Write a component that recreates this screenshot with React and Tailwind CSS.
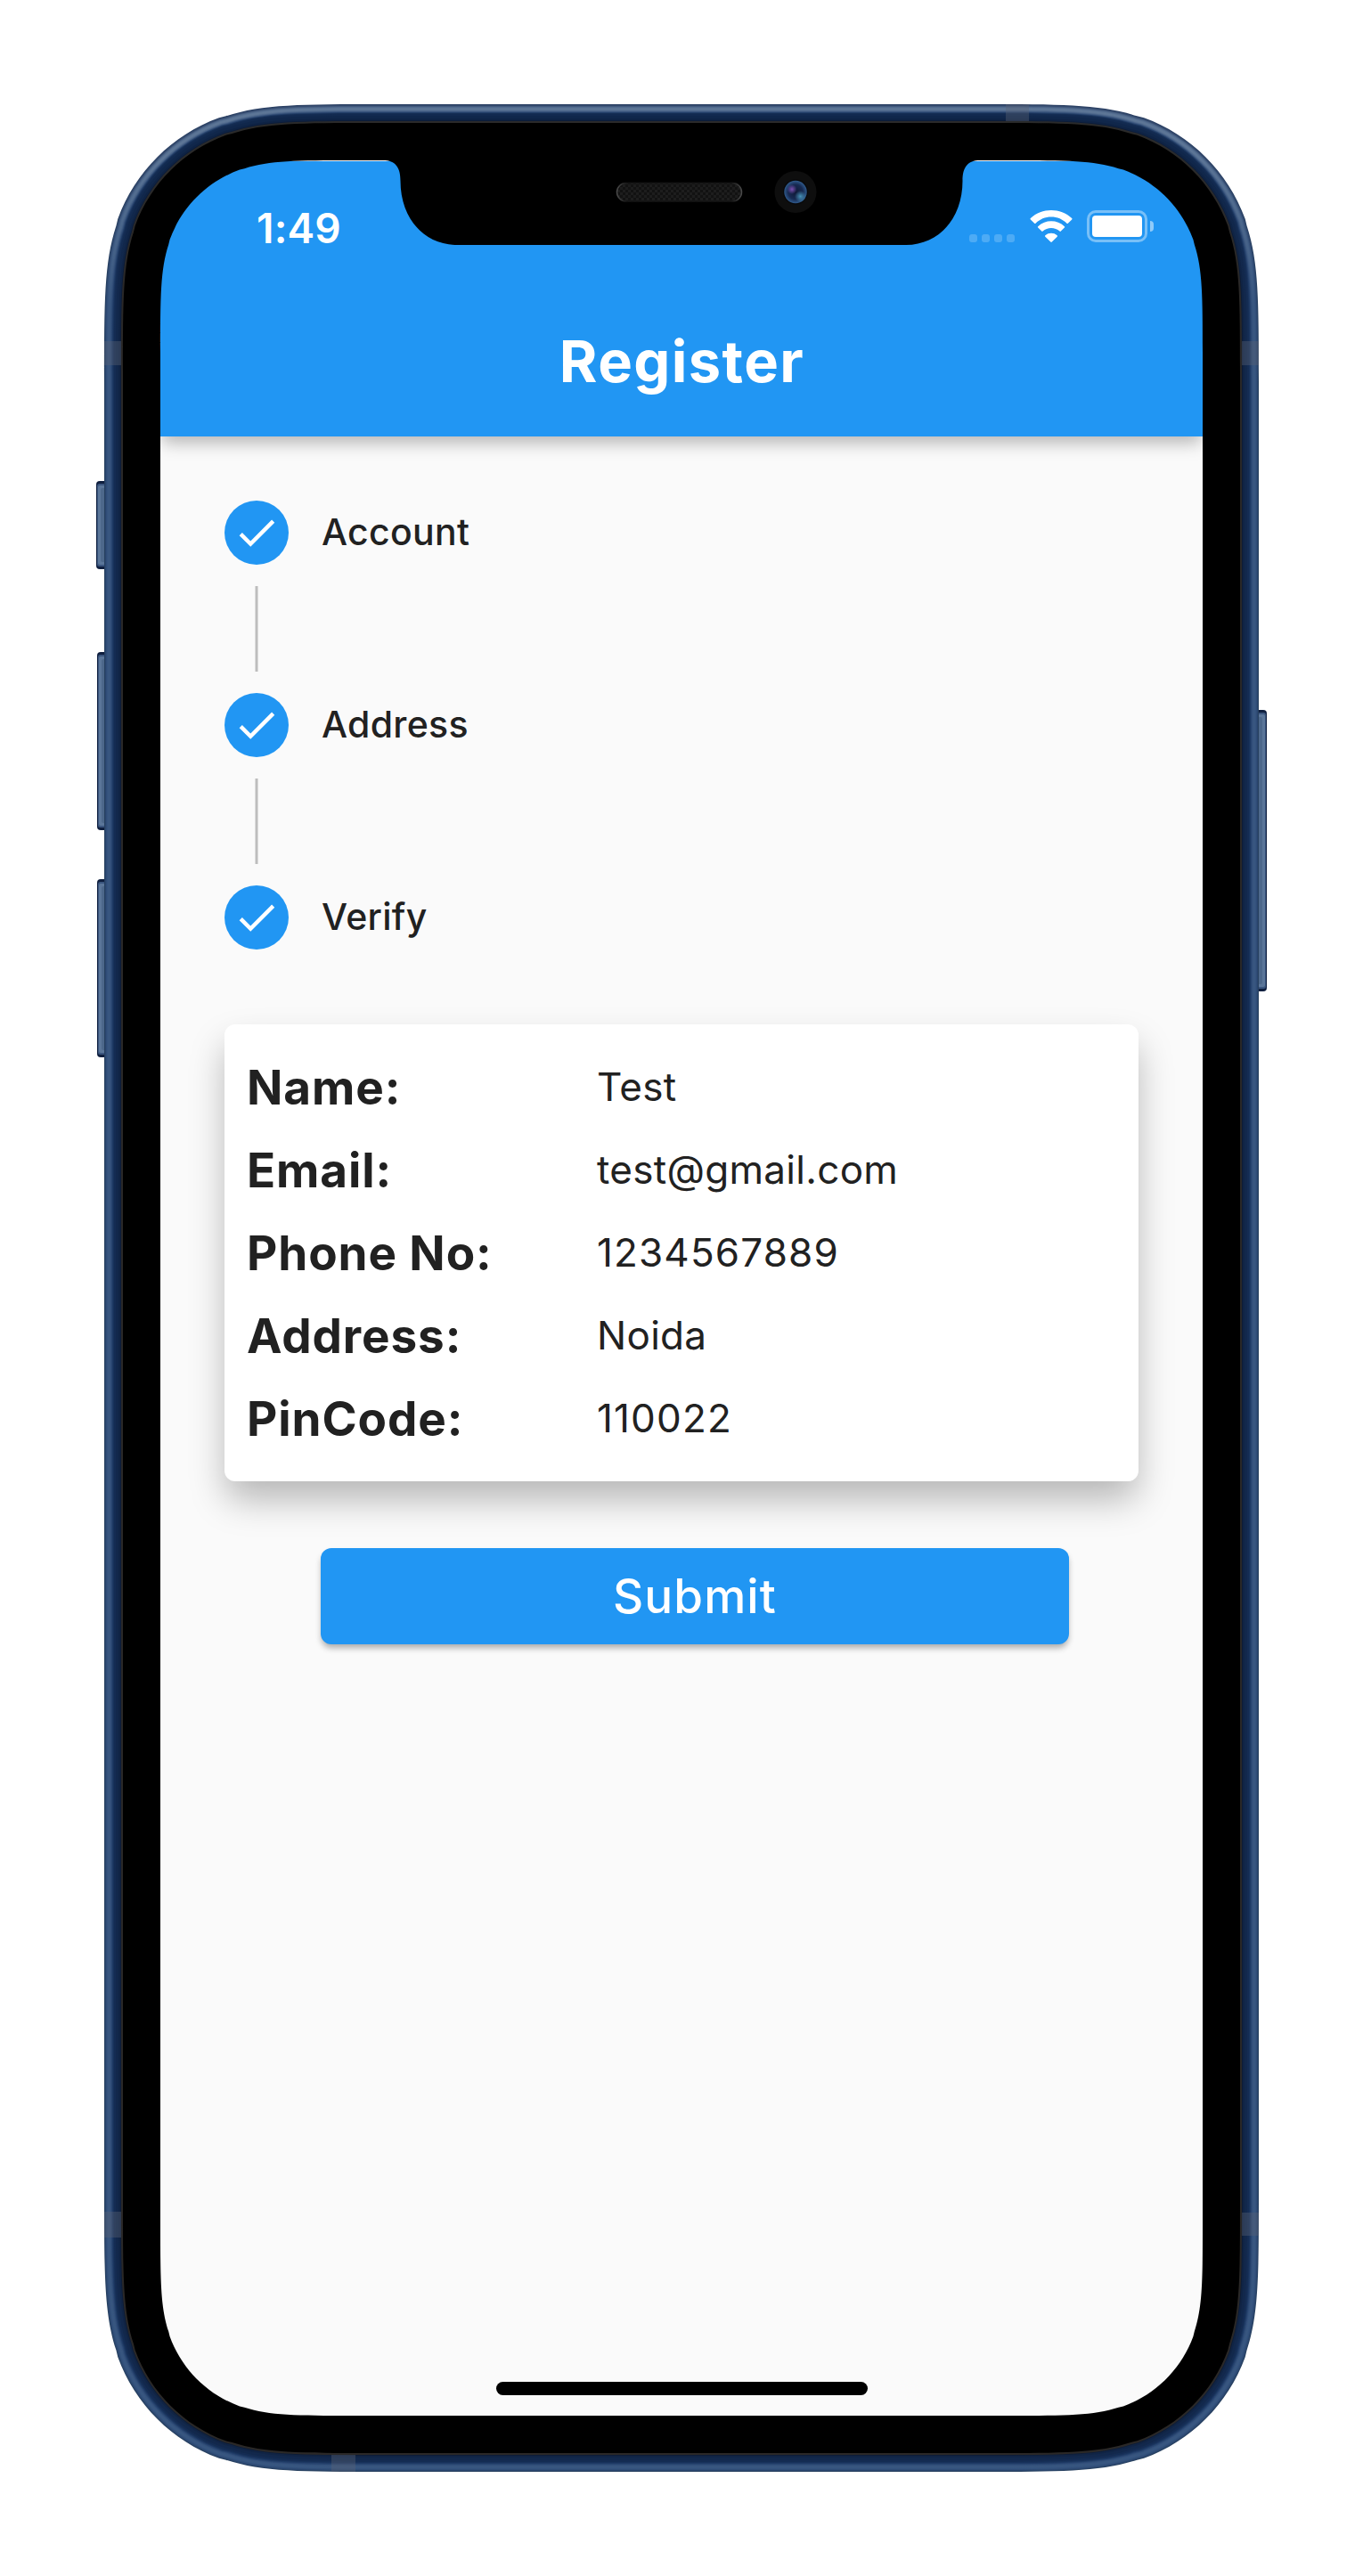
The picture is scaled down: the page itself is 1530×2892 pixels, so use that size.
import React from "react";

const r2 = (n) => Math.round(n * 100) / 100;

// Continuous-curvature rounded rectangle.
function squircle(x, y, w, h, r) {
  const a = 1.528665 * r, b = 1.088493 * r, c = 0.868407 * r, d = 0.669934 * r,
    e = 0.065496 * r, f = 0.631494 * r, g = 0.074911 * r, i = 0.372824 * r, j = 0.169059 * r;
  const X = x + w, Y = y + h;
  const p = (px, py) => r2(px) + " " + r2(py);
  return [
    "M", p(x + a, y), "L", p(X - a, y),
    "C", p(X - b, y), p(X - c, y), p(X - d, y + e), "L", p(X - f, y + g),
    "C", p(X - i, y + j), p(X - j, y + i), p(X - g, y + f), "L", p(X - e, y + d),
    "C", p(X, y + c), p(X, y + b), p(X, y + a), "L", p(X, Y - a),
    "C", p(X, Y - b), p(X, Y - c), p(X - e, Y - d), "L", p(X - g, Y - f),
    "C", p(X - j, Y - i), p(X - i, Y - j), p(X - f, Y - g), "L", p(X - d, Y - e),
    "C", p(X - c, Y), p(X - b, Y), p(X - a, Y), "L", p(x + a, Y),
    "C", p(x + b, Y), p(x + c, Y), p(x + d, Y - e), "L", p(x + f, Y - g),
    "C", p(x + i, Y - j), p(x + j, Y - i), p(x + g, Y - f), "L", p(x + e, Y - d),
    "C", p(x, Y - c), p(x, Y - b), p(x, Y - a), "L", p(x, y + a),
    "C", p(x, y + b), p(x, y + c), p(x + e, y + d), "L", p(x + g, y + f),
    "C", p(x + j, y + i), p(x + i, y + j), p(x + f, y + g), "L", p(x + d, y + e),
    "C", p(x + c, y), p(x + b, y), p(x + a, y), "Z",
  ].join(" ");
}

const ring = (n) => squircle(117 + n, 117 + n, 1296 - 2 * n, 2658 - 2 * n, 204 - n);
const SCREEN = squircle(180, 180, 1170, 2532, 141);

// [inset, colour at the top, colour on the sides and bottom]
const METAL = [
  [0, "#2a3f62", "#27405f"],
  [1, "#334a6e", "#2a466f"],
  [2, "#42597d", "#304d77"],
  [3, "#506a8d", "#34527d"],
  [4, "#5a7394", "#375680"],
  [5, "#5e7797", "#38567f"],
  [6, "#5a7394", "#36547e"],
  [7, "#4d678b", "#314e79"],
  [8, "#3a557d", "#284570"],
  [9, "#233f69", "#1e3a65"],
  [10, "#152e55", "#18325b"],
  [11, "#122a50", "#142c53"],
  [13, "#10274b", "#12284c"],
  [16, "#0e2345", "#102445"],
  [18, "#0c1c38", "#0d1c36"],
  [19, "#2a2a2a", "#2a2827"],
  [21, "#000000", "#000000"],
];

function SideButton({ x, y, h }) {
  return (
    <g>
      <rect x={x} y={y} width="20" height={h} rx="4" fill="#0f1f3f" />
      <rect x={x + 1} y={y + 3} width="18" height={h - 6} rx="2.5" fill="#3a557e" />
      <rect x={x + 2} y={y + 5} width="16" height={h - 10} rx="2" fill="#5b7699" />
      <rect x={x + 5} y={y + 8} width="10" height={h - 16} rx="2" fill="#4d688b" />
    </g>
  );
}

function Device() {
  return (
    <svg className="pointer-events-none absolute inset-0" width="1530" height="2892" viewBox="0 0 1530 2892" aria-hidden="true">
      <defs>
        {METAL.map(([n, top, side]) => (
          <linearGradient key={n} id={"m" + n} gradientUnits="userSpaceOnUse" x1="0" y1="117" x2="0" y2="340">
            <stop offset="0" stopColor={top} />
            <stop offset="0.25" stopColor={top} />
            <stop offset="1" stopColor={side} />
          </linearGradient>
        ))}
        <mask id="bezel" maskUnits="userSpaceOnUse" x="0" y="0" width="1530" height="2892">
          <rect width="1530" height="2892" fill="#fff" />
          <path d={SCREEN} fill="#000" />
        </mask>
        <pattern id="mesh" width="6" height="6" patternUnits="userSpaceOnUse">
          <rect width="6" height="6" fill="#121212" />
          <rect width="3" height="3" fill="#1d1d1d" />
          <rect x="3" y="3" width="3" height="3" fill="#1d1d1d" />
        </pattern>
        <linearGradient id="rim">
          <stop offset="0" stopColor="#4a4a4a" />
          <stop offset="0.08" stopColor="#151515" />
          <stop offset="0.92" stopColor="#151515" />
          <stop offset="1" stopColor="#4a4a4a" />
        </linearGradient>
        <radialGradient id="lens">
          <stop offset="0" stopColor="#0f1836" />
          <stop offset="0.65" stopColor="#172a52" />
          <stop offset="1" stopColor="#2f5a8c" />
        </radialGradient>
        <radialGradient id="violet">
          <stop offset="0" stopColor="#7a4fb0" />
          <stop offset="1" stopColor="#7a4fb0" stopOpacity="0" />
        </radialGradient>
        <radialGradient id="teal">
          <stop offset="0" stopColor="#4690b4" />
          <stop offset="1" stopColor="#4690b4" stopOpacity="0" />
        </radialGradient>
      </defs>
      <g mask="url(#bezel)">
        <SideButton x={108} y={540} h={99} />
        <SideButton x={109} y={732} h={200} />
        <SideButton x={109} y={987} h={200} />
        <SideButton x={1402} y={797} h={316} />
        {METAL.map(([n]) => (
          <path key={n} d={ring(n)} fill={"url(#m" + n + ")"} />
        ))}
        <g fill="#5b6272" fillOpacity="0.4">
          <rect x="117" y="383" width="19" height="27" />
          <rect x="1394" y="383" width="19" height="27" />
          <rect x="117" y="2483" width="19" height="29" />
          <rect x="1394" y="2484" width="19" height="26" />
          <rect x="1129" y="117" width="26" height="19" />
          <rect x="372" y="2756" width="27" height="19" />
        </g>
      </g>
      <path d="M430 179V180C444 180 449.500 188 449.500 203C449.500 246 477 275 513 275H1017C1053 275 1080.500 246 1080.500 203C1080.500 188 1086 180 1100 180V179Z" fill="#000" />
      <rect x="692.500" y="205.500" width="140" height="20.500" rx="10.250" fill="url(#mesh)" stroke="url(#rim)" strokeWidth="1.500" />
      <circle cx="893" cy="215.500" r="23.500" fill="#0e0e0e" />
      <circle cx="893" cy="215.500" r="14" fill="#08080a" />
      <circle cx="893" cy="215.500" r="12.700" fill="url(#lens)" />
      <circle cx="889" cy="212.500" r="5.500" fill="url(#violet)" />
      <circle cx="898.500" cy="220.500" r="6.500" fill="url(#teal)" />
    </svg>
  );
}

function StatusIcons() {
  return (
    <div className="flex h-9 items-center">
      <div className="mt-[27px] flex gap-[5px]">
        {[0, 1, 2, 3].map((i) => (
          <span key={i} className="size-[9px] rounded-[3px] bg-white/20" />
        ))}
      </div>
      <svg className="ml-[16px]" width="50" height="36" viewBox="0 0 50 36" fill="#fff" aria-hidden="true">
        <path d="M25 7.500c6.700 0 12.900 2.600 17.500 7.200.4.400.9.400 1.300 0l4.400-4.300c.4-.4.400-1 0-1.400C35.400-3 14.600-3 1.800 9c-.4.400-.4 1 0 1.400l4.400 4.300c.4.400.9.400 1.300 0C12.100 10.100 18.300 7.500 25 7.500Z" />
        <path d="M25 19.900c3.500 0 6.900 1.300 9.500 3.700.4.400.9.400 1.300 0l4.100-4c.4-.4.400-1 0-1.400-8.300-7.900-21.400-7.900-29.700 0-.4.400-.4 1 0 1.400l4.100 4c.4.400.9.400 1.300 0 2.500-2.400 5.900-3.700 9.400-3.700Z" />
        <path d="M31.700 28.300c.4.400.4 1 0 1.400l-5.900 5.900c-.4.400-1.100.4-1.500 0l-6-5.900c-.4-.4-.4-1 0-1.400 3.800-3.300 9.600-3.300 13.400 0Z" />
      </svg>
      <div className="ml-[15px] flex items-center gap-[3px]">
        <div className="flex h-9 w-[68px] rounded-[10px] border-[3px] border-white/40 p-[3px]">
          <span className="flex-1 rounded-[4px] bg-white" />
        </div>
        <span className="h-3 w-1 rounded-r-full bg-white/50" />
      </div>
    </div>
  );
}

function AppBar() {
  return (
    <header className="relative flex h-[309px] shrink-0 flex-col bg-[#2196f3] text-white shadow-[0_9px_18px_-2px_rgba(0,0,0,.28)]">
      <div className="flex h-[141px] items-start justify-between pr-[55px] pl-[108px]">
        <span className="mt-[45px] text-[46px] leading-[60px] font-semibold tracking-[0.2px]">1:49</span>
        <div className="mt-[55px]"><StatusIcons /></div>
      </div>
      <h1 className="pl-px text-center text-[65px] leading-[168px] font-bold tracking-[1.4px]">Register</h1>
    </header>
  );
}

function Step({ label, last }) {
  return (
    <li className="flex flex-col">
      <div className="flex h-[72px] items-center gap-[37px]">
        <span className="flex size-[72px] items-center justify-center rounded-full bg-[#2196f3]">
          <svg width="54" height="54" viewBox="0 0 24 24" fill="#fff" aria-hidden="true">
            <path d="M9 16.170 4.830 12l-1.420 1.410L9 19 21 7l-1.410-1.410z" />
          </svg>
        </span>
        <span className="text-[41px] font-medium tracking-[0.3px]">{label}</span>
      </div>
      {!last && (
        <div className="my-6 flex h-24 w-[72px] justify-center">
          <span className="w-1 border-x border-[#dcdcdc] bg-[#bdbdbd]" />
        </div>
      )}
    </li>
  );
}

const TEXT = "tracking-[0.3px]";
const DIGITS = "tracking-[1.15px]";

const DETAILS = [
  ["Name:", "Test", TEXT],
  ["Email:", "test@gmail.com", TEXT],
  ["Phone No:", "1234567889", DIGITS],
  ["Address:", "Noida", TEXT],
  ["PinCode:", "110022", DIGITS],
];

export default function App() {
  return (
    <div className="relative h-[2892px] w-[1530px] overflow-hidden bg-white p-[180px] font-['Inter',sans-serif] text-[#212121]">
      <main className="flex h-[2532px] w-[1170px] flex-col bg-[#fafafa]">
        <div className="h-px shrink-0 bg-white" />
        <AppBar />
        <ol className="mt-[72px] ml-[72px]">
          <Step label="Account" />
          <Step label="Address" />
          <Step label="Verify" last />
        </ol>
        <section className="mx-[72px] mt-[84px] h-[513px] rounded-[12px] bg-white pt-6 pl-[25px] shadow-[0_22px_40px_-2px_rgba(0,0,0,.28)]">
          <dl>
            {DETAILS.map(([term, value, spacing]) => (
              <div key={term} className="flex h-[93px] items-start">
                <dt className="w-[393px] text-[53px] leading-[94px] font-bold tracking-[0.9px]">{term}</dt>
                <dd className={"text-[44px] leading-[92px] font-normal " + spacing}>{value}</dd>
              </div>
            ))}
          </dl>
        </section>
        <button className="mt-[75px] ml-[180px] h-[108px] w-[840px] rounded-[12px] bg-[#2196f3] pt-[2px] text-[53px] font-medium tracking-[1.1px] text-white shadow-[0_5px_7px_-1px_rgba(0,0,0,.32)]">
          Submit
        </button>
        <div className="mt-auto mb-[23px] h-[15px] w-[417px] self-center rounded-full bg-black" />
      </main>
      <Device />
    </div>
  );
}
